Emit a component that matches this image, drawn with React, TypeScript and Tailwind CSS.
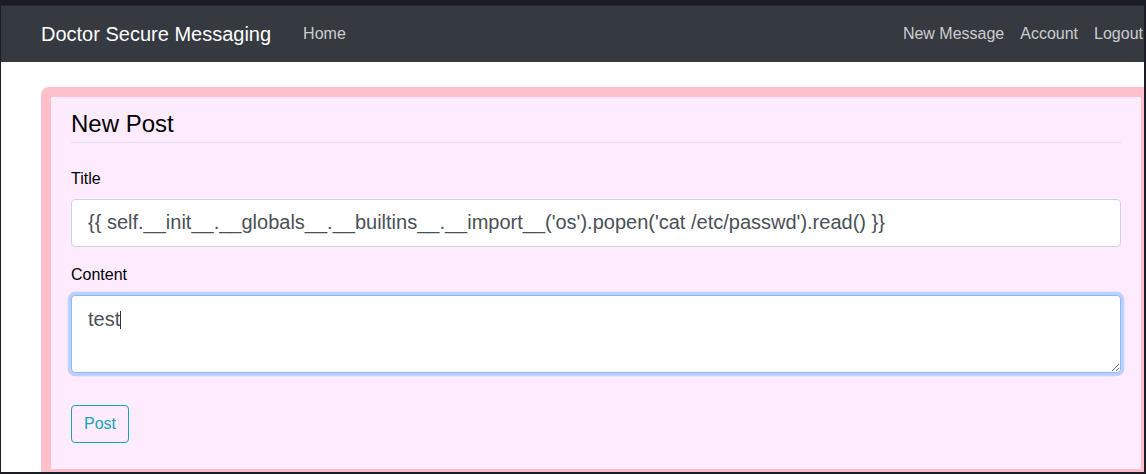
const navLink = 'text-[16px] text-white/75 leading-6';

const App = () => {
  return (
    <div
      className="w-[1146px] h-[474px] overflow-hidden bg-[#1c1c27] pt-[5px] pl-px pr-[2px] pb-[2px]"
      style={{ fontFamily: '"Liberation Sans", Arial, sans-serif' }}
    >
      <div className="h-full flex flex-col overflow-hidden bg-white border-t border-[#262630]">
        <nav className="h-[56px] shrink-0 bg-[#343a40] flex items-center pl-[40px] pr-px">
          <span className="text-[20px] leading-[30px] text-white">Doctor Secure Messaging</span>
          <span className={`${navLink} ml-[32px]`}>Home</span>
          <div className="ml-auto flex gap-4">
            <span className={navLink}>New Message</span>
            <span className={navLink}>Account</span>
            <span className={navLink}>Logout</span>
          </div>
        </nav>

        <main className="pl-[40px] pt-[25px]">
          <div className="w-[1110px] rounded-[8px] border-[10px] border-[#ffc0cb] bg-[#ffebfe] px-[20px] pt-[13px] pb-[26px]">
            <h2 className="text-[24px] leading-[28.8px] text-black pb-[3px] border-b border-[#dee2e6] mb-6">
              New Post
            </h2>

            <div className="mb-4">
              <label className="block text-[16px] leading-6 text-black mb-2">Title</label>
              <input
                readOnly
                value="{{ self.__init__.__globals__.__builtins__.__import__('os').popen('cat /etc/passwd').read() }}"
                className="block w-full h-[48px] px-4 py-2 text-[20px] leading-[30px] text-[#495057] bg-white border border-[#ced4da] rounded-[4px] outline-none"
              />
            </div>

            <div className="mb-8">
              <label className="block text-[16px] leading-6 text-black mb-2">Content</label>
              <div className="relative">
                <textarea
                  readOnly
                  rows={2}
                  defaultValue="test"
                  className="block w-full h-[78px] px-4 py-2 text-[20px] leading-[30px] text-[#495057] bg-white border border-[#80bdff] rounded-[4px] outline-none shadow-[0_0_0_3.2px_rgba(0,123,255,0.25)]"
                />
                <span className="absolute left-[49px] top-[16px] w-px h-[18px] bg-[#333]" />
              </div>
            </div>

            <button className="px-3 py-[6px] text-[16px] leading-6 text-[#17a2b8] border border-[#17a2b8] rounded-[4px] bg-transparent">
              Post
            </button>
          </div>
        </main>
      </div>
    </div>
  );
};

export default App;
